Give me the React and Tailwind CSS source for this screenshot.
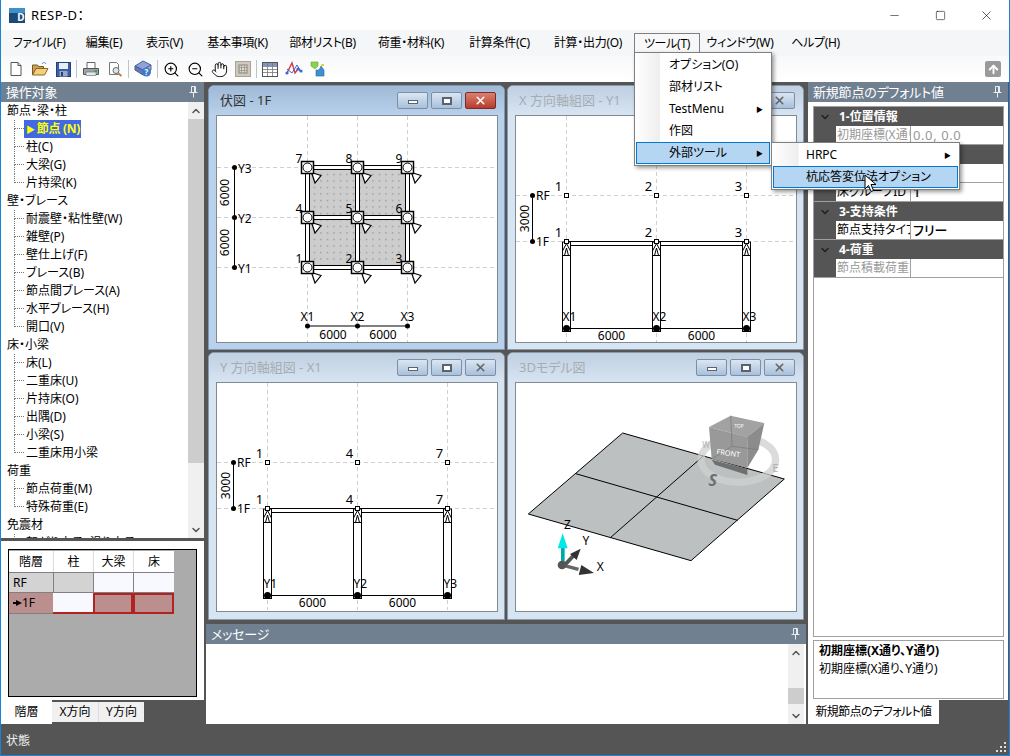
import { ChevronUp, ChevronDown, ZoomIn, ZoomOut, Hand, Minus, Square, X, ArrowUp } from 'lucide-react';

const MENUS = [
  ['ファイル(F)', 'w-[70px]'],
  ['編集(E)', 'w-[60px]'],
  ['表示(V)', 'w-[61px]'],
  ['基本事項(K)', 'w-[85px]'],
  ['部材リスト(B)', 'w-[85px]'],
  ['荷重・材料(K)', 'w-[92px]'],
  ['計算条件(C)', 'w-[85px]'],
  ['計算・出力(O)', 'w-[92px]'],
];

const TREE = [
  { title: '節点・梁・柱', items: ['節点 (N)', '柱(C)', '大梁(G)', '片持梁(K)'] },
  { title: '壁・ブレース', items: ['耐震壁・粘性壁(W)', '雑壁(P)', '壁仕上げ(F)', 'ブレース(B)', '節点間ブレース(A)', '水平ブレース(H)', '開口(V)'] },
  { title: '床・小梁', items: ['床(L)', '二重床(U)', '片持床(O)', '出隅(D)', '小梁(S)', '二重床用小梁'] },
  { title: '荷重', items: ['節点荷重(M)', '特殊荷重(E)'] },
  { title: '免震材', items: ['転がり支承・滑り支承(Q)'] },
];

/* ---------- toolbar icons ---------- */

function IconNew() {
  return (
    <svg width="16" height="16" viewBox="0 0 16 16">
      <path d="M3 1.5h7l3 3v10H3z" fill="#fff" stroke="#555" />
      <path d="M10 1.5v3h3" fill="#ddd" stroke="#555" />
    </svg>
  );
}

function IconOpen() {
  return (
    <svg width="18" height="16" viewBox="0 0 18 16">
      <path d="M1.5 4h5l1 1.5h5v2H5L1.5 14z" fill="#c9a25a" stroke="#7a5a20" />
      <path d="M1.5 14 5 7.5h12L13.5 14z" fill="#f3cf7a" stroke="#8a6a2a" />
      <path d="M11 3c1-2 3-2 4 0" fill="none" stroke="#4a7fc0" />
    </svg>
  );
}

function IconSave() {
  return (
    <svg width="15" height="15" viewBox="0 0 15 15">
      <rect x="0.5" y="0.5" width="14" height="14" fill="#3a5fa8" stroke="#27407a" />
      <rect x="3" y="1" width="9" height="6" fill="#e8eef8" />
      <rect x="3.5" y="9" width="8" height="5.5" fill="#9aa8c4" />
      <rect x="5" y="10" width="2" height="4" fill="#27407a" />
    </svg>
  );
}

function IconPrint() {
  return (
    <svg width="18" height="16" viewBox="0 0 18 16">
      <path d="M5 1.5h8v6H5z" fill="#fff" stroke="#666" />
      <path d="M1.5 7.5h15v6h-15z" fill="#9aa4ac" stroke="#555" />
      <rect x="4" y="11" width="10" height="3.5" fill="#e6e6e6" stroke="#666" strokeWidth="0.6" />
      <rect x="12.5" y="9" width="2.5" height="2" fill="#2aa84a" />
    </svg>
  );
}

function IconPreview() {
  return (
    <svg width="16" height="16" viewBox="0 0 16 16">
      <path d="M2.5 1.5h7l2 2v10h-9z" fill="#fff" stroke="#777" />
      <circle cx="9" cy="9.5" r="3" fill="#d8e8f0" stroke="#6a6a6a" />
      <path d="m11 12 3.5 3" stroke="#b08a40" strokeWidth="2" />
    </svg>
  );
}

function IconHelp() {
  return (
    <svg width="18" height="18" viewBox="0 0 18 18">
      <path d="M1 6 9 1l8 4-8 5z" fill="#8ea4d8" stroke="#4a5f98" />
      <path d="M1 6v4l8 5v-5z" fill="#6478b8" stroke="#4a5f98" />
      <path d="M17 5v5l-8 5v-5z" fill="#a6b6e0" stroke="#4a5f98" />
      <circle cx="12.5" cy="12" r="4.5" fill="#3f78c8" />
      <text x="12.5" y="15" fontSize="8" fontWeight="700" textAnchor="middle" fill="#fff">?</text>
    </svg>
  );
}

function IconFit() {
  return (
    <svg width="16" height="16" viewBox="0 0 16 16">
      <rect x="0.5" y="0.5" width="15" height="15" fill="#cfc8bc" stroke="#a8a298" />
      <rect x="4" y="4" width="8" height="8" fill="#dcd8d0" stroke="#8a867e" />
      <path d="M6.5 4v8M9.5 4v8M4 6.5h8M4 9.5h8" stroke="#8a867e" strokeWidth="0.6" />
    </svg>
  );
}

function IconTable() {
  return (
    <svg width="16" height="15" viewBox="0 0 16 15">
      <rect x="0.5" y="0.5" width="15" height="14" fill="#fff" stroke="#555" />
      <rect x="1" y="1" width="14" height="3" fill="#7f95c4" />
      <path d="M5.5 1v13M10.5 1v13M1 4.5h14M1 7.5h14M1 10.5h14" stroke="#777" strokeWidth="0.8" />
    </svg>
  );
}

function IconGraph() {
  return (
    <svg width="18" height="16" viewBox="0 0 18 16">
      <path d="M2 12 7 2l3 10 3-4 3 2" fill="none" stroke="#d83a3a" strokeWidth="1.4" />
      <path d="M2 8 7 12l5-8 4 7" fill="none" stroke="#3a6ad8" strokeWidth="1" />
      <circle cx="2" cy="12" r="1.6" fill="#3a6ad8" />
      <circle cx="13" cy="8" r="1.6" fill="#3a6ad8" />
      <circle cx="16" cy="10" r="1.6" fill="#3a6ad8" />
    </svg>
  );
}

function IconArrange() {
  return (
    <svg width="16" height="16" viewBox="0 0 16 16">
      <path d="M1 1h7v4l-3 3-4-3z" fill="#8fd04a" stroke="#6aa030" strokeWidth="0.6" />
      <path d="M6 9h3l2-4 3 4v6H6z" fill="#3f8fd0" stroke="#2a6aa0" strokeWidth="0.6" />
      <path d="M11 3h3v2h-3z" fill="#e8d040" />
    </svg>
  );
}

function Sep() {
  return <span className="mx-[-2px] h-[18px] w-px bg-[#bcc4cc]" />;
}

/* ---------- panels ---------- */

function PinTitle({ children }) {
  return (
    <div className="flex h-[20px] shrink-0 items-center justify-between bg-[#708090] pl-[5px] pr-[6px] text-[13px] leading-none tracking-[-0.2px] text-white">
      <span>{children}</span>
      <svg width="9" height="12" viewBox="0 0 9 12" className="text-[#e8edf2]">
        <path d="M2.5.5h4v6h-4zM.5 6.5h8M4.5 7v4.5M5.5 1v5" fill="none" stroke="currentColor" />
      </svg>
    </div>
  );
}

function TreeItem({ label, last, selected }) {
  return (
    <div className="flex h-[18px] items-center pl-[13px]">
      <span className="flex h-[18px] w-[10px] shrink-0 flex-col">
        <span className="h-[9px] border-b border-l border-dotted border-[#777]" />
        <span className={last ? 'h-[9px]' : 'h-[9px] border-l border-dotted border-[#777]'} />
      </span>
      {selected ? (
        <span className="flex h-[18px] items-center gap-[2px] bg-[#4169e1] pl-[2px] pr-px font-bold tracking-[-0.3px] text-[#ffff00]">
          <span className="text-[9px]">▶</span>
          {label}
        </span>
      ) : (
        <span className="pl-[2px]">{label}</span>
      )}
    </div>
  );
}

function Scrollbar({ thumb, spacer }) {
  return (
    <div className="flex w-[16px] shrink-0 flex-col items-center bg-[#f0f0f0]">
      <div className="flex h-[17px] items-center">
        <ChevronUp size={12} strokeWidth={3} color="#555" />
      </div>
      {spacer}
      <div className={thumb} />
      <div className="flex-1" />
      <div className="flex h-[17px] items-center">
        <ChevronDown size={12} strokeWidth={3} color="#555" />
      </div>
    </div>
  );
}

function LeftPanel() {
  return (
    <div className="flex w-[203px] shrink-0 flex-col">
      <PinTitle>操作対象</PinTitle>
      <div className="flex h-[436px] shrink-0 overflow-hidden bg-white">
        <div className="min-w-0 flex-1 overflow-hidden">
          {TREE.map((g) => (
            <div key={g.title}>
              <div className="flex h-[18px] items-center pl-[6px]">{g.title}</div>
              {g.items.map((it, i) => (
                <TreeItem key={it} label={it} last={i === g.items.length - 1} selected={it === '節点 (N)'} />
              ))}
            </div>
          ))}
        </div>
        <Scrollbar thumb="w-[16px] h-[344px] bg-[#cdcdcd]" />
      </div>
      <div className="mt-[3px] h-[159px] shrink-0 bg-white px-[7px] py-[8px]">
        <div className="h-[148px] border border-black bg-[#ababab]">
          <div className="mt-px grid grid-cols-[44px_40px_40px_41px] grid-rows-[21px_21px_21px] text-center leading-[21px]">
            <div className="bg-white">階層</div>
            <div className="border-l border-[#ddd] bg-white">柱</div>
            <div className="border-l border-[#ddd] bg-white">大梁</div>
            <div className="border-l border-[#ddd] bg-white">床</div>
            <div className="border-y border-[#808080] bg-[#d3d3d3] pl-[4px] text-left leading-[19px]">RF</div>
            <div className="border-y border-l border-[#808080] bg-[#d3d3d3]" />
            <div className="border-y border-l border-[#808080] bg-[#f8f8ff]" />
            <div className="border-y border-l border-[#808080] bg-[#f8f8ff]" />
            <div className="flex items-center border-b border-[#808080] bg-[#bc8f8f] pl-[4px] text-left leading-[20px]">
              <span className="flex items-center">
                <span className="h-[2px] w-[3px] bg-black" />
                <span className="h-0 w-0 border-y-[3px] border-l-[6px] border-y-transparent border-l-black" />
              </span>
              1F
            </div>
            <div className="border-b-2 border-[#b22222] bg-[#f8f8ff]" />
            <div className="border-2 border-[#b22222] bg-[#bc8f8f]" />
            <div className="border-2 border-[#b22222] bg-[#bc8f8f]" />
          </div>
        </div>
      </div>
      <div className="flex h-[24px] shrink-0 items-start">
        <div className="flex h-[24px] w-[51px] items-center justify-center bg-white">階層</div>
        <div className="mt-[2px] flex h-[20px] w-[46px] items-center justify-center bg-[#f0f0f0]">X方向</div>
        <div className="mt-[2px] flex h-[20px] w-[46px] items-center justify-center border-l border-[#ddd] bg-[#f0f0f0]">Y方向</div>
      </div>
    </div>
  );
}

/* ---------- diagrams ---------- */

function Plan() {
  const xs = [307.5, 357.5, 407.5];
  const ys = [167.5, 217.5, 267.5];
  const labels = [['1', '2', '3'], ['4', '5', '6'], ['7', '8', '9']];
  return (
    <svg viewBox="217 116 280 227" width="280" height="227" className="block" fontFamily="'Noto Sans', sans-serif" fontSize="12">
      <defs>
        <pattern id="dots" x="311" y="171" width="6.5" height="6.5" patternUnits="userSpaceOnUse">
          <rect width="6.5" height="6.5" fill="#cdcdcd" />
          <rect x="3" y="3" width="1" height="1" fill="#666" />
        </pattern>
      </defs>
      <g stroke="#d0d0d0" strokeDasharray="4 3">
        {xs.map((x) => <line key={x} x1={x} x2={x} y1="116" y2="343" />)}
        {ys.map((y) => <line key={y} x1="217" x2="497" y1={y} y2={y} />)}
      </g>
      <rect x="310" y="170" width="95" height="95" fill="url(#dots)" />
      {ys.map((y) => (
        <rect key={y} x="307.5" y={y - 2} width="100" height="4" fill="#fff" stroke="#000" />
      ))}
      {xs.map((x) => (
        <rect key={x} x={x - 2} y="167.5" width="4" height="100" fill="#fff" stroke="#000" />
      ))}
      {ys.map((y, r) =>
        xs.map((x, c) => (
          <g key={x + '-' + y}>
            <path d={`M${x + 4} ${y + 5}l9.5 3-6 7.5-3.5-10.5`} fill="#fff" stroke="#000" strokeWidth="1.2" />
            <rect x={x - 6} y={y - 6} width="12" height="12" fill="#fff" stroke="#000" strokeWidth="1.5" />
            <circle cx={x} cy={y} r="4.5" fill="#fff" stroke="#000" />
            <text x={x - 8.5} y={y - 5} textAnchor="middle">{labels[2 - r][c]}</text>
          </g>
        ))
      )}
      <line x1="234.5" x2="234.5" y1="167.5" y2="267.5" stroke="#000" />
      {ys.map((y, i) => (
        <g key={y}>
          <circle cx="234.5" cy={y} r="2.5" />
          <text x="238" y={y + 5}>{'Y' + (3 - i)}</text>
        </g>
      ))}
      <text transform="translate(229 192.5) rotate(-90)" textAnchor="middle">6000</text>
      <text transform="translate(229 242.5) rotate(-90)" textAnchor="middle">6000</text>
      <line x1="307.5" x2="407.5" y1="326" y2="326" stroke="#000" />
      {xs.map((x, i) => (
        <g key={x}>
          <circle cx={x} cy="326" r="2.5" />
          <text x={x} y="321" textAnchor="middle">{'X' + (i + 1)}</text>
        </g>
      ))}
      <text x="333" y="339" textAnchor="middle">6000</text>
      <text x="383" y="339" textAnchor="middle">6000</text>
    </svg>
  );
}

function Elevation({ nums, axis }) {
  const xs = [50.5, 140.5, 230.5];
  return (
    <svg viewBox="0 0 280 227" width="280" height="227" className="block" fontFamily="'Noto Sans', sans-serif" fontSize="12">
      <g stroke="#d0d0d0" strokeDasharray="4 3">
        {xs.map((x) => <line key={x} x1={x} x2={x} y1="0" y2="227" />)}
        <line x1="0" x2="280" y1="79.5" y2="79.5" />
        <line x1="0" x2="280" y1="125.5" y2="125.5" />
      </g>
      <rect x="50.5" y="125.5" width="180" height="4" fill="#fff" stroke="#000" />
      <line x1="50" x2="231" y1="212.5" y2="212.5" stroke="#000" />
      {xs.map((x, i) => (
        <g key={x}>
          <rect x={x - 4} y="126" width="8" height="89.5" fill="#fff" stroke="#000" />
          <path d={`M${x - 4} 139.5h8M${x - 4} 135 ${x} 127.5l4 7.5M${x - 2} 139.5 ${x} 132l2 7.5`} fill="none" stroke="#000" />
          <circle cx={x} cy="212.5" r="3.5" />
          <text x={x - 4} y="205">{axis + (i + 1)}</text>
          <rect x={x - 2} y="77.5" width="4" height="4" fill="#fff" stroke="#000" />
          <rect x={x - 2} y="123.5" width="4" height="4" fill="#fff" stroke="#000" />
          <text x={x - 8} y="75" textAnchor="middle" fontSize="13">{nums[i]}</text>
          <text x={x - 8} y="121" textAnchor="middle" fontSize="13">{nums[i]}</text>
        </g>
      ))}
      <line x1="16.5" x2="16.5" y1="79.5" y2="125.5" stroke="#000" />
      <circle cx="16.5" cy="79.5" r="2.5" />
      <circle cx="16.5" cy="125.5" r="2.5" />
      <text x="20" y="84">RF</text>
      <text x="20" y="130">1F</text>
      <text transform="translate(12.5 102.5) rotate(-90)" textAnchor="middle">3000</text>
      <text x="95.5" y="224" textAnchor="middle">6000</text>
      <text x="185.5" y="224" textAnchor="middle">6000</text>
    </svg>
  );
}

function Model3D() {
  return (
    <svg viewBox="28 100 843 684" width="281" height="228" className="block" fontFamily="'Noto Sans', sans-serif">
      <path d="M65 493 348 250 833 388 553 633z" fill="#bcc0c0" stroke="#000" strokeWidth="3" strokeLinejoin="round" />
      <path d="M207 372 693 512M590 319 310 565" stroke="#000" strokeWidth="3" />
      <g opacity="0.75">
        <ellipse cx="695" cy="330" rx="112" ry="68" fill="none" stroke="#d0d0d0" strokeWidth="22" />
        <text x="618" y="408" fontSize="48" fontWeight="700" fontStyle="italic" fill="#555" textAnchor="middle">S</text>
        <text x="806" y="368" fontSize="34" fill="#999" textAnchor="middle">E</text>
        <text x="598" y="296" fontSize="24" fill="#999" textAnchor="middle">W</text>
        <path d="M615 330 722 358 722 376 625 345z" fill="#555" />
      </g>
      <path d="M607 232 672 198 773 220 722 262z" fill="#a2a2a2" />
      <path d="M607 232 722 262 722 355 615 328z" fill="#999" />
      <path d="M722 262 773 220 755 300 722 355z" fill="#8c8c8c" />
      <path d="M672 198 676 290M676 290 615 328M676 290 755 300" stroke="#777" strokeWidth="2" fill="none" />
      <text x="664" y="318" fontSize="22" fill="#fff" textAnchor="middle" transform="rotate(8 664 318)">FRONT</text>
      <text x="697" y="236" fontSize="14" fill="#fff" textAnchor="middle">TOP</text>
      <path d="M163 640V595h11v45z" fill="#00a8a8" />
      <path d="M168 551 183 596H153z" fill="#00e8e8" />
      <path d="m172 640 28-30 8 8-28 30z" fill="#555" />
      <path d="m222 597-12 34-20-18z" fill="#333" />
      <path d="m172 642 45 12-3 10-45-12z" fill="#666" />
      <path d="m262 670-46 6 8-30z" fill="#333" />
      <circle cx="166" cy="646" r="13" fill="#555" />
      <text x="182" y="537" fontSize="36" textAnchor="middle">Z</text>
      <text x="238" y="585" fontSize="36" textAnchor="middle">Y</text>
      <text x="281" y="664" fontSize="36" textAnchor="middle">X</text>
    </svg>
  );
}

function MdiWindow({ title, active, tall, children }) {
  return (
    <div className={active ? 'flex flex-col rounded-t-[6px] border border-[#7a98b8] bg-[#b9d1ea] pb-[6px] pl-[7px] pr-[6px]' : 'flex flex-col rounded-t-[6px] border border-[#8a9aaa] bg-[#d7e4f2] pb-[6px] pl-[7px] pr-[6px]'}>
      <div className={active ? 'ml-[-7px] mr-[-6px] flex h-[29px] shrink-0 items-center justify-between rounded-t-[6px] bg-linear-to-b from-[#9fb9d6] to-[#b9d1ea] pl-[11px] pr-[8px] text-[#333]' : 'ml-[-7px] mr-[-6px] flex h-[29px] shrink-0 items-center justify-between rounded-t-[6px] bg-linear-to-b from-[#bfd0e2] to-[#d7e4f2] pl-[11px] pr-[8px] text-[#a6acb2]'}>
        <span className="text-[13px]">{title}</span>
        <div className="flex gap-[3px]">
          <span className="flex h-[17px] w-[31px] items-center justify-center rounded-[2px] border border-[#7d8fa8] bg-linear-to-b from-[#dbe6f2] to-[#a9c0da]">
            <span className="mt-[3px] h-[4px] w-[10px] border border-[#5a6470] bg-white" />
          </span>
          <span className="flex h-[17px] w-[31px] items-center justify-center rounded-[2px] border border-[#7d8fa8] bg-linear-to-b from-[#dbe6f2] to-[#a9c0da]">
            <span className="h-[8px] w-[10px] border-2 border-[#5a6470] bg-white" />
          </span>
          <span className={active ? 'flex h-[17px] w-[31px] items-center justify-center rounded-[2px] border border-[#7a2a2a] bg-linear-to-b from-[#d88070] to-[#b83a2a]' : 'flex h-[17px] w-[31px] items-center justify-center rounded-[2px] border border-[#7d8fa8] bg-linear-to-b from-[#dbe6f2] to-[#a9c0da]'}>
            <X size={13} strokeWidth={3} color={active ? '#fff' : '#666'} />
          </span>
        </div>
      </div>
      <div className={tall ? 'h-[230px] overflow-hidden border border-[#808a94] bg-white' : 'h-[229px] overflow-hidden border border-[#808a94] bg-white'}>{children}</div>
    </div>
  );
}

/* ---------- property grid ---------- */

function Category({ label }) {
  return (
    <div className="flex h-[19px] items-center bg-[#555] font-bold text-white">
      <span className="flex w-[22px] justify-center">
        <ChevronDown size={12} strokeWidth={3} color="#222" />
      </span>
      <span className="pl-[3px]">{label}</span>
    </div>
  );
}

function PropRow({ name, value, dim }) {
  return (
    <div className="flex h-[19px] border-b border-[#a0a0a0] bg-[#555]">
      <div className={dim ? 'ml-[22px] w-[74px] shrink-0 overflow-hidden whitespace-nowrap bg-white pl-px leading-[18px] text-[#999]' : 'ml-[22px] w-[74px] shrink-0 overflow-hidden whitespace-nowrap bg-white pl-px leading-[18px]'}>
        {name}
      </div>
      <div className={dim ? 'flex-1 border-l border-[#a0a0a0] bg-white pl-[2px] text-[13px] leading-[18px] tracking-[0.6px] text-[#999]' : 'flex-1 border-l border-[#a0a0a0] bg-white pl-[2px] text-[13px] font-medium leading-[18px]'}>
        {value}
      </div>
    </div>
  );
}

function RightPanel() {
  return (
    <div className="flex w-[200px] shrink-0 flex-col">
      <PinTitle>新規節点のデフォルト値</PinTitle>
      <div className="flex h-[598px] shrink-0 flex-col bg-white px-[5px] pb-px pt-[4px]">
        <div className="mr-[-1px] flex-1 border border-[#a0a0a0]">
          <Category label="1-位置情報" />
          <PropRow name="初期座標(X通り、Y通り)" value="0.0, 0.0" dim />
          <Category label="" />
          <PropRow name="" value="" />
          <PropRow name="床グループID" value="1" />
          <Category label="3-支持条件" />
          <PropRow name="節点支持タイプ" value="フリー" />
          <Category label="4-荷重" />
          <PropRow name="節点積載荷重" value="" dim />
        </div>
        <div className="mr-[-1px] mt-[3px] h-[59px] shrink-0 border border-[#a0a0a0] pl-[5px] pt-px leading-[18px]">
          <div className="font-bold">初期座標(X通り、Y通り)</div>
          <div>初期座標(X通り、Y通り)</div>
        </div>
      </div>
      <div className="flex h-[24px] w-[131px] shrink-0 items-center justify-center bg-white tracking-[-0.6px]">新規節点のデフォルト値</div>
    </div>
  );
}

/* ---------- popup menus ---------- */

function PopItem({ label, sub, hot }) {
  return (
    <div className={hot ? 'flex h-[22px] items-center justify-between border border-[#0078d7] bg-[#b5d6f2] pl-[32px] pr-[6px]' : 'flex h-[22px] items-center justify-between border border-transparent pl-[32px] pr-[6px]'}>
      <span>{label}</span>
      {sub && <span className="text-[7px] leading-none">▶</span>}
    </div>
  );
}

export default function App() {
  return (
    <div className="relative flex h-[756px] w-[1010px] flex-col overflow-hidden border-x border-b border-[#1883d7] bg-[#555] font-['Noto_Sans','Noto_Sans_CJK_JP',sans-serif] text-[12px] leading-none text-black [font-feature-settings:'palt']">
      {/* title bar */}
      <div className="flex h-[30px] shrink-0 items-center bg-white pl-[8px]">
        <svg width="16" height="15" viewBox="0 0 16 15">
          <rect width="16" height="15" fill="#1c4a78" />
          <rect y="0" width="16" height="5" fill="#3f8fc8" />
          <text x="12" y="13" fontSize="10" fontWeight="700" fill="#fff" textAnchor="middle">D</text>
        </svg>
        <span className="ml-[6px] text-[13px] tracking-[0.4px]">RESP-D：</span>
        <div className="ml-auto flex h-[30px]">
          <span className="flex w-[46px] items-center justify-center"><Minus size={13} strokeWidth={1} /></span>
          <span className="flex w-[46px] items-center justify-center"><Square size={11} strokeWidth={1.2} /></span>
          <span className="flex w-[46px] items-center justify-center"><X size={15} strokeWidth={1} /></span>
        </div>
      </div>

      {/* menu bar */}
      <div className="flex h-[26px] shrink-0 items-center whitespace-nowrap bg-[#f5f6f7] pl-[3px] tracking-[-0.3px]">
        {MENUS.map(([label, w]) => (
          <span key={label} className={'flex justify-center ' + w}>{label}</span>
        ))}
        <span className="mt-[3px] flex h-[20px] w-[66px] items-center justify-center self-start border border-b-0 border-[#808080] bg-[#f8f8f8]">ツール(T)</span>
        <span className="flex w-[80px] justify-center">ウィンドウ(W)</span>
        <span className="flex w-[71px] justify-center">ヘルプ(H)</span>
      </div>

      {/* tool bar */}
      <div className="flex h-[26px] shrink-0 items-center gap-[7px] bg-linear-to-b from-[#f8f9fa] to-white pl-[7px] pr-[8px]">
        <IconNew />
        <IconOpen />
        <IconSave />
        <Sep />
        <IconPrint />
        <IconPreview />
        <Sep />
        <IconHelp />
        <Sep />
        <ZoomIn size={17} strokeWidth={1.6} />
        <ZoomOut size={17} strokeWidth={1.6} />
        <Hand size={17} strokeWidth={1.3} />
        <IconFit />
        <Sep />
        <IconTable />
        <IconGraph />
        <IconArrange />
        <span className="ml-auto flex h-[16px] w-[16px] items-center justify-center rounded-[2px] bg-[#9a9a9a]">
          <ArrowUp size={13} strokeWidth={3.5} color="#fff" />
        </span>
      </div>

      {/* body */}
      <div className="flex min-h-0 flex-1">
        <LeftPanel />

        <div className="ml-[2px] flex w-[600px] shrink-0 flex-col">
          <div className="grid h-[542px] shrink-0 grid-cols-[297px_297px] grid-rows-[265px_268px] gap-x-[2px] gap-y-[2px] pl-[2px] pt-[3px]">
            <MdiWindow title="伏図 - 1F" active><Plan /></MdiWindow>
            <MdiWindow title="X 方向軸組図 - Y1"><Elevation nums={['1', '2', '3']} axis="X" /></MdiWindow>
            <MdiWindow title="Y 方向軸組図 - X1" tall><Elevation nums={['1', '4', '7']} axis="Y" /></MdiWindow>
            <MdiWindow title="3Dモデル図" tall><Model3D /></MdiWindow>
          </div>
          <PinTitle>メッセージ</PinTitle>
          <div className="flex h-[80px] shrink-0 justify-end bg-white pr-[2px]">
            <Scrollbar thumb="w-[16px] h-[16px] bg-[#cdcdcd]" spacer={<div className="h-[27px]" />} />
          </div>
        </div>

        <div className="ml-[2px]">
          <RightPanel />
        </div>
      </div>

      {/* status bar */}
      <div className="flex h-[29px] shrink-0 items-center justify-between bg-[#555] pl-[5px] pr-[2px] text-[#f0f0f0]">
        <span>状態</span>
        <svg width="12" height="12" viewBox="0 0 12 12" className="mb-[2px] self-end" fill="#ddd">
          <rect x="9" y="1" width="2" height="2" />
          <rect x="5" y="5" width="2" height="2" />
          <rect x="9" y="5" width="2" height="2" />
          <rect x="1" y="9" width="2" height="2" />
          <rect x="5" y="9" width="2" height="2" />
          <rect x="9" y="9" width="2" height="2" />
        </svg>
      </div>

      {/* open menus */}
      <div className="absolute left-[633px] top-[52px] w-[138px] border border-[#808080] bg-[linear-gradient(90deg,#fff_0,#eee_18%,#fff_18.5%)] p-px shadow-[2px_2px_4px_rgba(0,0,0,0.4)]">
        <PopItem label="オプション(O)" />
        <PopItem label="部材リスト" />
        <PopItem label="TestMenu" sub />
        <PopItem label="作図" />
        <PopItem label="外部ツール" sub hot />
      </div>
      <div className="absolute left-[770px] top-[142px] w-[189px] border border-[#808080] bg-[linear-gradient(90deg,#fff_0,#eee_14%,#fff_14.5%)] p-px shadow-[2px_2px_4px_rgba(0,0,0,0.4)]">
        <PopItem label="HRPC" sub />
        <PopItem label="杭応答変位法オプション" hot />
      </div>
      <svg className="absolute left-[863px] top-[174px]" width="14" height="20" viewBox="0 0 14 20">
        <path d="M1 1v14l3.5-3.5 2.5 6 2.5-1-2.5-6h5z" fill="#fff" stroke="#000" />
      </svg>
    </div>
  );
}
